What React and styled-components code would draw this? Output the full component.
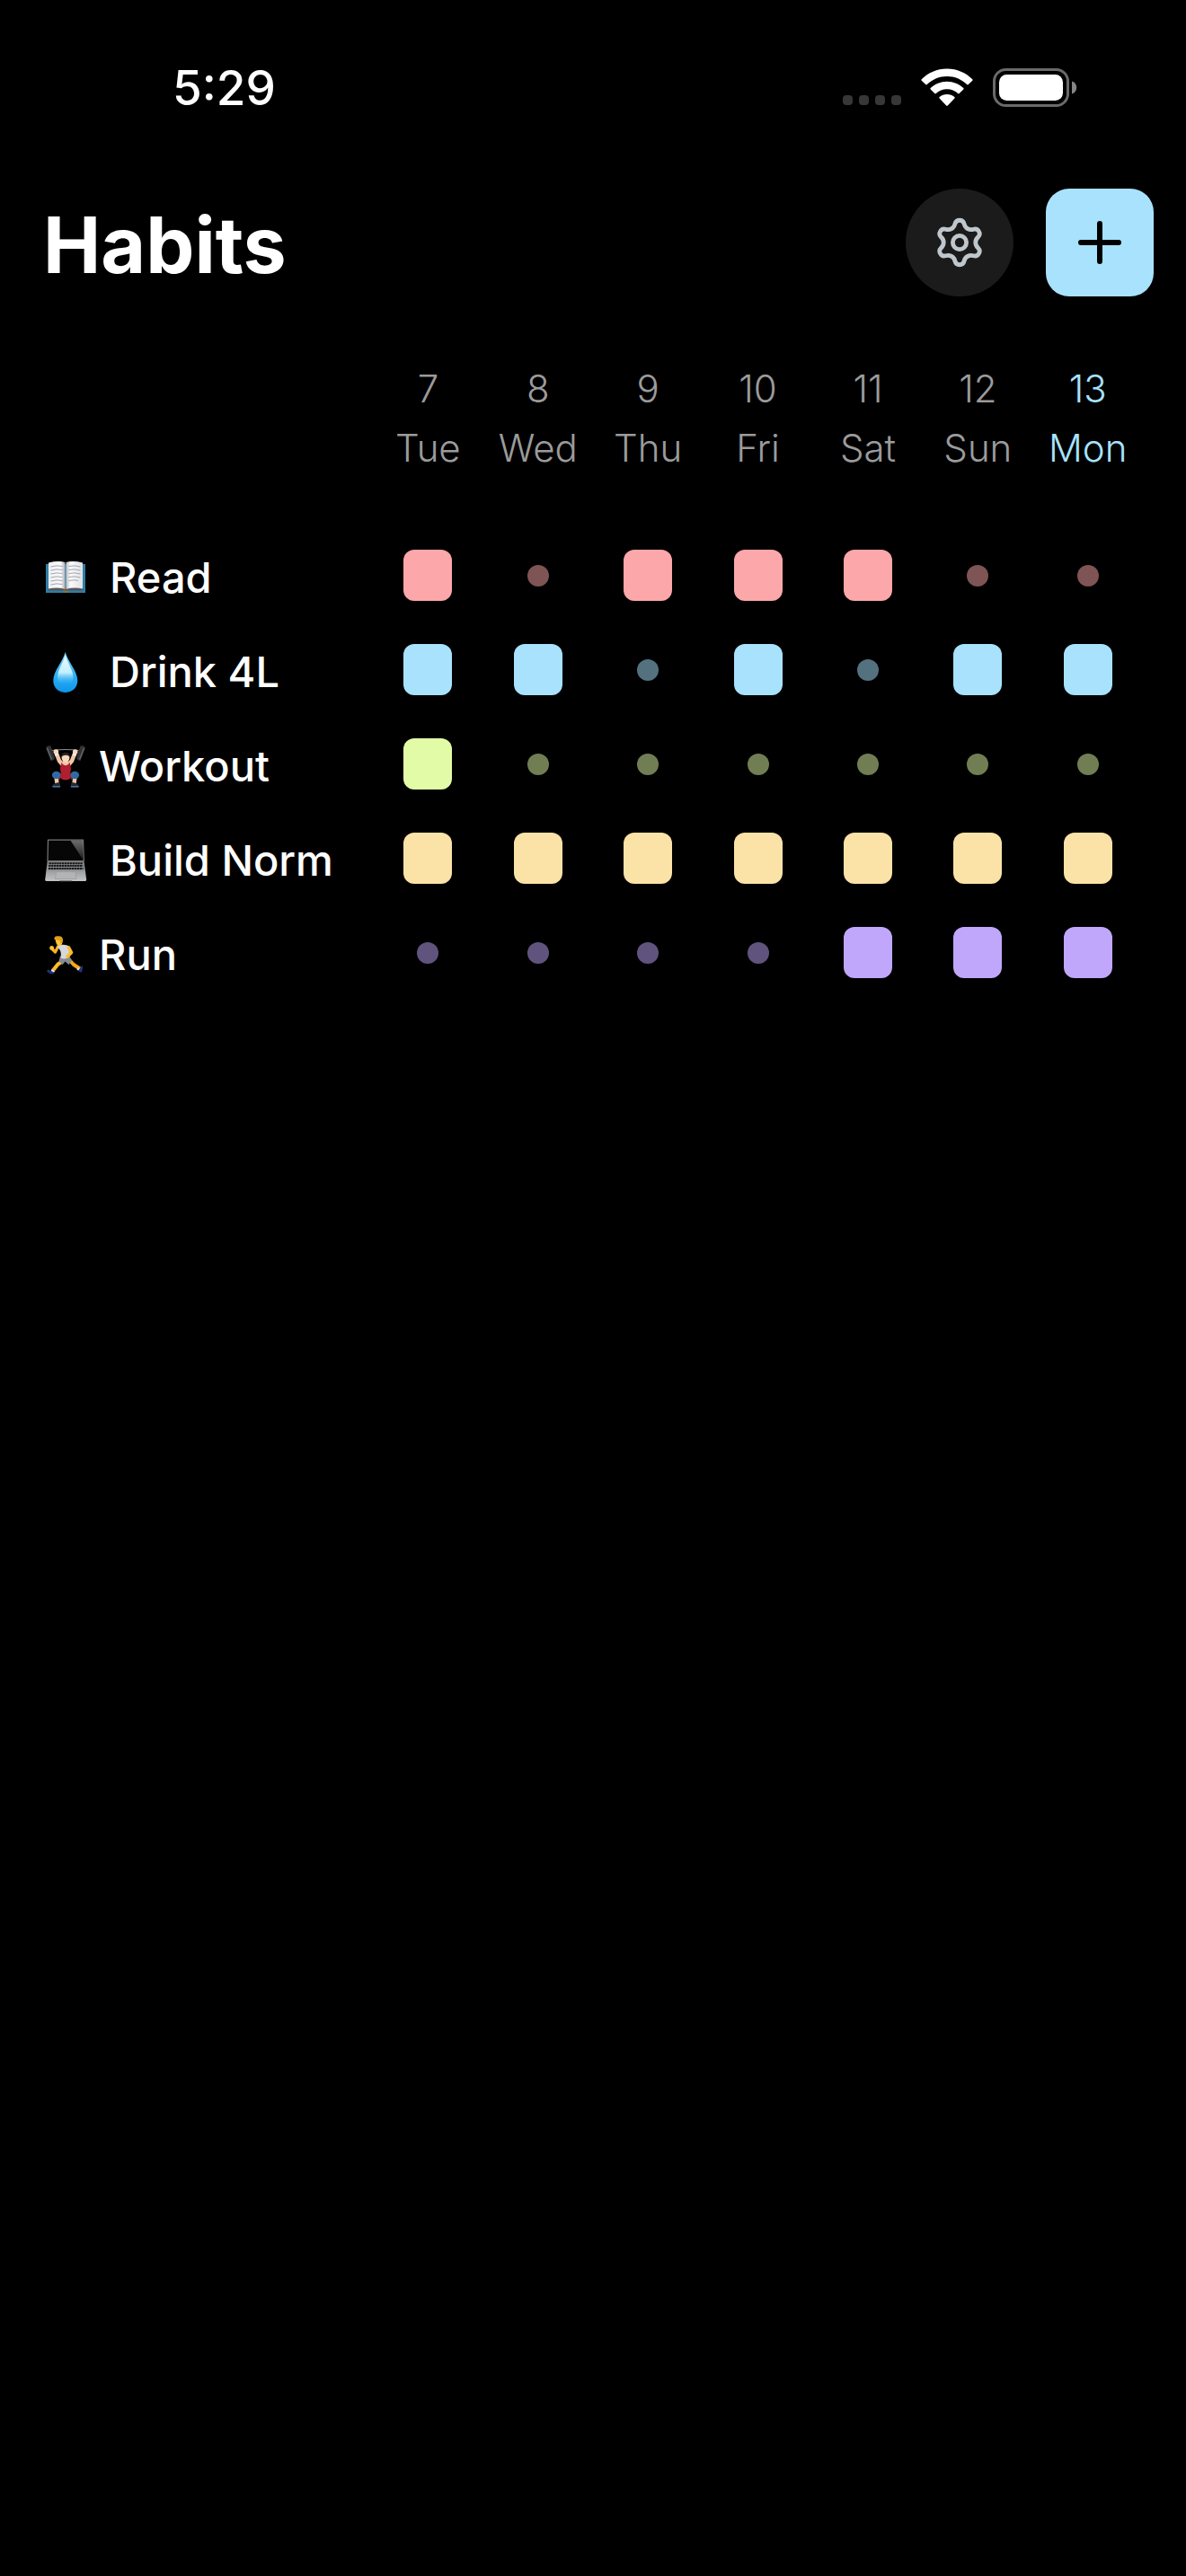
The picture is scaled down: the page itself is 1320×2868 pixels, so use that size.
import React, { useState } from "react";
import styled, { createGlobalStyle } from "styled-components";

const GlobalStyle = createGlobalStyle`
  *, *::before, *::after { box-sizing: border-box; }
  html { background: #000; }
  body {
    margin: 0;
    background: #000;
    color: #fff;
    font-family: Inter, "Liberation Sans", sans-serif;
    -webkit-font-smoothing: antialiased;
  }
`;

const Screen = styled.div`
  min-height: 100vh;
  display: flex;
  flex-direction: column;
`;

const StatusBar = styled.div`
  display: flex;
  align-items: center;
  justify-content: space-between;
  height: 194px;
  padding: 0 121px 0 192px;
`;

const Clock = styled.time`
  padding-top: 2px;
  font-size: 53px;
  font-weight: 500;
  line-height: 64px;
`;

const Indicators = styled.div`
  display: flex;
  align-items: center;
  gap: 22px;
`;

const Signal = styled.div`
  display: flex;
  align-self: flex-end;
  gap: 7px;
  padding-bottom: 2px;
`;

const SignalDot = styled.span`
  width: 11px;
  height: 11px;
  border-radius: 4px;
  background: #373737;
`;

const Header = styled.header`
  display: flex;
  align-items: center;
  justify-content: space-between;
  padding: 16px 36px 0 48px;
`;

const Title = styled.h1`
  margin: 0;
  padding-top: 6px;
  font-size: 86px;
  font-weight: 700;
  line-height: 112px;
`;

const Actions = styled.div`
  display: flex;
  gap: 36px;
`;

const ActionButton = styled.button`
  display: grid;
  place-items: center;
  width: 120px;
  height: 120px;
  padding: 0;
  border: 0;
  border-radius: ${(p) => (p.$round ? "50%" : "26px")};
  background: ${(p) => (p.$round ? "#1b1b1b" : "#a8e2fd")};
  color: ${(p) => (p.$round ? "#bfc7cc" : "#000")};
  cursor: pointer;
`;

const Content = styled.main`
  padding: 70px 48px 0;
`;

const HabitTable = styled.table`
  width: 100%;
  table-layout: fixed;
  border-collapse: collapse;
`;

const NameColumn = styled.col`
  width: 30%;
`;

const DayHeading = styled.th`
  padding: 0 0 56px;
  color: ${(p) => (p.$today ? "#a8e2fd" : "#9b9b9b")};
  font-size: 42px;
  font-weight: 300;
  line-height: 66px;
  text-align: center;
`;

const DayPart = styled.span`
  display: block;
`;

const HabitHeading = styled.th`
  padding: 4px 0 0;
  text-align: left;
`;

const HabitLabel = styled.div`
  display: flex;
  align-items: center;
  gap: ${(p) => (p.$wide ? "24px" : "12px")};
  font-size: 47px;
  font-weight: 500;
  line-height: 56px;
  white-space: nowrap;
`;

const DayCell = styled.td`
  height: 105px;
  padding: 0;
  text-align: center;
`;

const Mark = styled.input`
  appearance: none;
  display: block;
  width: 24px;
  height: 24px;
  margin: 0 auto;
  border-radius: 50%;
  background: ${(p) => p.$color};
  opacity: 0.5;
  cursor: pointer;

  &:checked {
    width: 54px;
    height: 57px;
    border-radius: 12px;
    opacity: 1;
  }
`;

const Glyph = ({ children }) => (
  <svg width="50" height="48" viewBox="-1 0 50 48" aria-hidden="true">
    {children}
  </svg>
);

const BookIcon = () => (
  <Glyph>
    <defs>
      <linearGradient id="pageLeft" x1="0" x2="1">
        <stop offset="0" stopColor="#eef0f3" />
        <stop offset="0.75" stopColor="#fafafc" />
        <stop offset="1" stopColor="#a9abb0" />
      </linearGradient>
      <linearGradient id="pageRight" x1="0" x2="1">
        <stop offset="0" stopColor="#b9bbc0" />
        <stop offset="0.25" stopColor="#fafafc" />
        <stop offset="1" stopColor="#dfe1e5" />
      </linearGradient>
    </defs>
    <path d="M2 9H46V41H2Z" fill="#2f7fa6" />
    <path d="M4.500 35H43.500V38.500H27Q24 42 21 38.500H4.500Z" fill="#56575a" />
    <path d="M5 7.500Q16 5 23.500 7V37Q15 34.500 5 36.500Z" fill="url(#pageLeft)" />
    <path d="M43 7.500Q32 5 24.500 7V37Q33 34.500 43 36.500Z" fill="url(#pageRight)" />
    <path d="M21 38.500H27L26 41H22Z" fill="#8a7440" />
    <path d="M7.500 12Q14 10 20.500 11.500M7.500 16Q14 14 20.500 15.500M7.500 20Q14 18 20.500 19.500M7.500 24Q14 22 20.500 23.500M7.500 28Q14 26 20.500 27.500M7.500 32Q14 30 20.500 31.500M27.500 11.500Q34 10 40.500 12M27.500 15.500Q34 14 40.500 16M27.500 19.500Q34 18 40.500 20M27.500 23.500Q34 22 40.500 24M27.500 27.500Q34 26 38 27.500" fill="none" stroke="#a3a5ad" strokeWidth="1" />
  </Glyph>
);

const DropIcon = () => (
  <Glyph>
    <defs>
      <linearGradient id="dropBody" x1="0" y1="0" x2="0" y2="1">
        <stop offset="0" stopColor="#7fd4fa" />
        <stop offset="0.5" stopColor="#35b4f6" />
        <stop offset="1" stopColor="#0d95ea" />
      </linearGradient>
      <linearGradient id="dropShine" x1="0" y1="0" x2="0" y2="1">
        <stop offset="0" stopColor="#e8fbff" />
        <stop offset="0.6" stopColor="#c5effe" />
        <stop offset="1" stopColor="#35b4f6" stopOpacity="0" />
      </linearGradient>
    </defs>
    <path d="M23.700 2C26.500 13 37.300 23 37.300 33.700C37.300 41.500 31.500 47 23.700 47S10.300 41.500 10.300 33.700C10.300 23 21 13 23.700 2Z" fill="url(#dropBody)" />
    <path d="M23.700 5C26 14 32.500 22 32.500 30C32.500 35.500 28.500 38 23.700 38S15 35.500 15 30C15 22 21.500 14 23.700 5Z" fill="url(#dropShine)" />
  </Glyph>
);

const LifterIcon = () => (
  <Glyph>
    <path d="M9 6.500Q24 4.500 38.500 6.500" fill="none" stroke="#8d8f94" strokeWidth="1.200" />
    <path d="M2 3.500Q3.500 0.500 7.500 1.500L12 15Q11 18 7.500 18Z" fill="#303235" />
    <path d="M46 3.500Q44.500 0.500 40.500 1.500L36 15Q37 18 40.500 18Z" fill="#303235" />
    <path d="M3.500 4L8.500 16.500M44.500 4L39.500 16.500" fill="none" stroke="#66696e" strokeWidth="1.300" />
    <path d="M13.500 9L17 18L22 24M34.500 9L31 18L26 24" fill="none" stroke="#f3c6a5" strokeWidth="4.500" strokeLinecap="round" />
    <circle cx="13.300" cy="8" r="2.800" fill="#fbd9bd" />
    <circle cx="34.700" cy="8" r="2.800" fill="#fbd9bd" />
    <path d="M12 11.800L16 10.600M36 11.800L32 10.600" stroke="#eef1f4" strokeWidth="2" />
    <path d="M19.500 20Q24 24 28.500 20Q31 27 29 32L30 37Q24 42 18 37L19 32Q17 27 19.500 20Z" fill="#b01f30" />
    <path d="M20.500 21.500Q24 25 27.500 21.500V18.500H20.500Z" fill="#f3c6a5" />
    <ellipse cx="24" cy="14.500" rx="4.400" ry="5.200" fill="#fbd9bd" />
    <path d="M19.400 13.500Q19 8.800 24 8.800T28.600 13.500Q26.500 11.500 24 11.800T19.400 13.500Z" fill="#2a211f" />
    <path d="M19 36L14 33.500M29 36L34 33.500" stroke="#a01c2c" strokeWidth="6.500" />
    <path d="M13.500 36L14.500 43M34.500 36L33.500 43" stroke="#f3c6a5" strokeWidth="4.500" />
    <ellipse cx="13.700" cy="34" rx="4.800" ry="4.200" fill="#2f6ba3" />
    <ellipse cx="34.300" cy="34" rx="4.800" ry="4.200" fill="#2f6ba3" />
    <path d="M9 46.500Q10 42.500 17.500 42L18.500 47H9ZM39 46.500Q38 42.500 30.500 42L29.500 47H39Z" fill="#252a30" />
    <path d="M9.500 46.800H18M38.500 46.800H30" stroke="#4c8fc4" strokeWidth="1.200" />
  </Glyph>
);

const LaptopIcon = () => (
  <Glyph>
    <defs>
      <linearGradient id="laptopBase" x1="0" y1="0" x2="0" y2="1">
        <stop offset="0" stopColor="#77797b" />
        <stop offset="1" stopColor="#c3c4c6" />
      </linearGradient>
      <linearGradient id="laptopShine" x1="0" y1="0" x2="0" y2="1">
        <stop offset="0" stopColor="#6b6b6b" />
        <stop offset="1" stopColor="#1c1c1c" />
      </linearGradient>
    </defs>
    <path d="M4.500 1.200H43.500L44.300 24.500H4Z" fill="#060606" stroke="#77797b" strokeWidth="1.200" strokeLinejoin="round" />
    <path d="M29.500 1.800H43L43.600 23.500Z" fill="url(#laptopShine)" />
    <path d="M3.700 24.500H44.500L47.200 45.500Q47.200 47 45.500 47H3Q1.200 47 1.200 45.500Z" fill="url(#laptopBase)" />
    <path d="M5.500 26H43L43.900 35.500H4.500Z" fill="#8c8e90" />
    <path d="M5.500 27.300H43M5.200 30.100H43.300M4.900 33H43.600" stroke="#17181a" strokeWidth="2" strokeDasharray="2.400 0.500" />
    <path d="M13.500 36.800H35L36 44.500H12.500Z" fill="#b3b4b6" stroke="#98999b" strokeWidth="0.700" />
    <path d="M17 46.300H31.500L30.500 47.300H18Z" fill="#6b6c6e" />
  </Glyph>
);

const RunnerIcon = () => (
  <Glyph>
    <path d="M27.500 29L33 35L40 39.500" fill="none" stroke="#f3a81c" strokeWidth="4" strokeLinejoin="round" />
    <path d="M21 31L15.500 34.500L9.500 42" fill="none" stroke="#fdbc2c" strokeWidth="4.200" strokeLinejoin="round" />
    <path d="M15.500 15L12.500 21L9 17.500" fill="none" stroke="#f7b023" strokeWidth="3.200" strokeLinecap="round" strokeLinejoin="round" />
    <path d="M18 25.500L27.500 24L31 30.500L27.500 35L23.500 31.500L20.500 35L16.500 31Z" fill="#868b92" />
    <path d="M14.500 14.500Q19 11.500 26 13.500L29.500 16L27.500 27Q23 29.500 18.500 27.500Q19.500 21 17.500 18.500Z" fill="#d5d8dc" />
    <path d="M27.500 16L30.500 21.500L26 26" fill="none" stroke="#fdbc2c" strokeWidth="3.600" strokeLinecap="round" strokeLinejoin="round" />
    <circle cx="8.600" cy="16.500" r="2.400" fill="#fdc437" />
    <path d="M12.500 6Q13 13.500 17 14.500Q21 13.500 20.500 7Z" fill="#fdc437" />
    <path d="M11.500 7Q11 3 15 3.300Q20.500 2.500 21 7Q21.500 10.500 18.500 11.500L17.500 8Z" fill="#dfa019" />
    <path d="M4 40.500L8.500 42.300L12 41.500L10.500 45.500Q7 45.500 3.300 43Z" fill="#22357d" />
    <path d="M8.500 40.300L12 42L11.300 43.500L7.800 42Z" fill="#e8eaee" />
    <path d="M43 35.800L39.500 39.500L36.500 40.500L41.500 44Q43.500 41 43 35.800Z" fill="#22357d" />
    <path d="M37.500 38.200L39.800 39.300L38 41.500L36.500 40.500Z" fill="#e8eaee" />
  </Glyph>
);

const days = [
  [7, "Tue"],
  [8, "Wed"],
  [9, "Thu"],
  [10, "Fri"],
  [11, "Sat"],
  [12, "Sun"],
  [13, "Mon"],
];
const today = 13;

const initialHabits = [
  { Icon: BookIcon, wide: true, name: "Read", color: "#fca7a9", done: [1, 0, 1, 1, 1, 0, 0] },
  { Icon: DropIcon, wide: true, name: "Drink 4L", color: "#a8e2fd", done: [1, 1, 0, 1, 0, 1, 1] },
  { Icon: LifterIcon, name: "Workout", color: "#e2fba7", done: [1, 0, 0, 0, 0, 0, 0] },
  { Icon: LaptopIcon, wide: true, name: "Build Norm", color: "#fbe2a7", done: [1, 1, 1, 1, 1, 1, 1] },
  { Icon: RunnerIcon, name: "Run", color: "#c0a7fc", done: [0, 0, 0, 0, 1, 1, 1] },
];

const WifiIcon = () => (
  <svg width="58" height="43" viewBox="0 0 58 43" fill="#fff" aria-hidden="true">
    <path d="M29 0.500C40 0.500 50 5 57.300 12.200Q58 13 57.300 13.700L52.800 18.100Q52 18.800 51.200 18.100C45.200 12.400 37.500 9.100 29 9.100S12.800 12.400 6.800 18.100Q6 18.800 5.200 18.100L0.700 13.700Q0 13 0.700 12.200C8 5 18 0.500 29 0.500Z" />
    <path d="M29 14.700C36 14.700 42.500 17.500 47.300 22.100Q48 22.900 47.300 23.600L42.700 28.100Q42 28.800 41.200 28.100C37.900 25.100 33.700 23.300 29 23.300S20.100 25.100 16.800 28.100Q16 28.800 15.300 28.100L10.700 23.600Q10 22.900 10.700 22.100C15.500 17.500 22 14.700 29 14.700Z" />
    <path d="M29 29C32.300 29 35.200 30.100 37.400 32Q38.200 32.800 37.400 33.600L29.800 41.500Q29 42.300 28.200 41.500L20.600 33.600Q19.800 32.800 20.600 32C22.800 30.100 25.700 29 29 29Z" />
  </svg>
);

const BatteryIcon = () => (
  <svg width="94" height="43" viewBox="0 0 94 43" aria-hidden="true">
    <rect x="1.500" y="1.500" width="82" height="40" rx="13" fill="none" stroke="#6a6a6a" strokeWidth="3" />
    <rect x="7" y="7" width="71" height="29" rx="8.500" fill="#fff" />
    <path d="M88 14.500C91.500 15.500 93.200 18.300 93.200 21.500S91.500 27.500 88 28.500Z" fill="#858585" />
  </svg>
);

// Six-lobed outline: small arcs at the tips joined tangentially by wider arcs in the valleys.
const gearPath = (() => {
  const tip = 20;
  const tipRadius = 5.2;
  const valley = 25.6;
  const valleyRadius = 8;
  const at = (r, deg) => [r * Math.cos((deg * Math.PI) / 180), r * Math.sin((deg * Math.PI) / 180)];
  const joint = (tipDeg, valleyDeg) => {
    const a = at(tip, tipDeg);
    const b = at(valley, valleyDeg);
    const t = tipRadius / (tipRadius + valleyRadius);
    return [a[0] + (b[0] - a[0]) * t, a[1] + (b[1] - a[1]) * t].map((n) => n.toFixed(2)).join(" ");
  };
  let d = `M${joint(-90, -120)}`;
  for (let i = 0; i < 6; i += 1) {
    const deg = -90 + i * 60;
    d += `A${tipRadius} ${tipRadius} 0 0 1 ${joint(deg, deg + 30)}`;
    d += `A${valleyRadius} ${valleyRadius} 0 0 0 ${joint(deg + 60, deg + 30)}`;
  }
  return `${d}Z`;
})();

const GearIcon = () => (
  <svg width="60" height="60" viewBox="-30 -30 60 60" fill="none" stroke="currentColor" strokeWidth="4.800" strokeLinejoin="round" aria-hidden="true">
    <path d={gearPath} />
    <circle r="7.600" />
  </svg>
);

const PlusIcon = () => (
  <svg width="48" height="48" viewBox="0 0 48 48" stroke="currentColor" strokeWidth="6" strokeLinecap="round" aria-hidden="true">
    <path d="M24 3V45M3 24H45" />
  </svg>
);

function HabitRow({ habit, onToggle }) {
  const { Icon } = habit;
  return (
    <tr>
      <HabitHeading scope="row">
        <HabitLabel $wide={habit.wide}>
          <Icon />
          {habit.name}
        </HabitLabel>
      </HabitHeading>
      {days.map(([date, weekday], i) => (
        <DayCell key={date}>
          <Mark
            type="checkbox"
            $color={habit.color}
            checked={Boolean(habit.done[i])}
            onChange={() => onToggle(i)}
            aria-label={`${habit.name}, ${weekday} ${date}`}
          />
        </DayCell>
      ))}
    </tr>
  );
}

export default function App() {
  const [habits, setHabits] = useState(initialHabits);
  const toggle = (name, day) =>
    setHabits((list) =>
      list.map((h) =>
        h.name === name ? { ...h, done: h.done.map((v, i) => (i === day ? 1 - v : v)) } : h
      )
    );

  return (
    <Screen>
      <GlobalStyle />
      <StatusBar>
        <Clock>5:29</Clock>
        <Indicators>
          <Signal>
            <SignalDot />
            <SignalDot />
            <SignalDot />
            <SignalDot />
          </Signal>
          <WifiIcon />
          <BatteryIcon />
        </Indicators>
      </StatusBar>
      <Header>
        <Title>Habits</Title>
        <Actions>
          <ActionButton $round type="button" aria-label="Settings">
            <GearIcon />
          </ActionButton>
          <ActionButton type="button" aria-label="Add habit">
            <PlusIcon />
          </ActionButton>
        </Actions>
      </Header>
      <Content>
        <HabitTable>
          <colgroup>
            <NameColumn />
            <col span={7} />
          </colgroup>
          <thead>
            <tr>
              <td />
              {days.map(([date, weekday]) => (
                <DayHeading key={date} scope="col" $today={date === today}>
                  <DayPart>{date}</DayPart>
                  <DayPart>{weekday}</DayPart>
                </DayHeading>
              ))}
            </tr>
          </thead>
          <tbody>
            {habits.map((habit) => (
              <HabitRow key={habit.name} habit={habit} onToggle={(day) => toggle(habit.name, day)} />
            ))}
          </tbody>
        </HabitTable>
      </Content>
    </Screen>
  );
}
